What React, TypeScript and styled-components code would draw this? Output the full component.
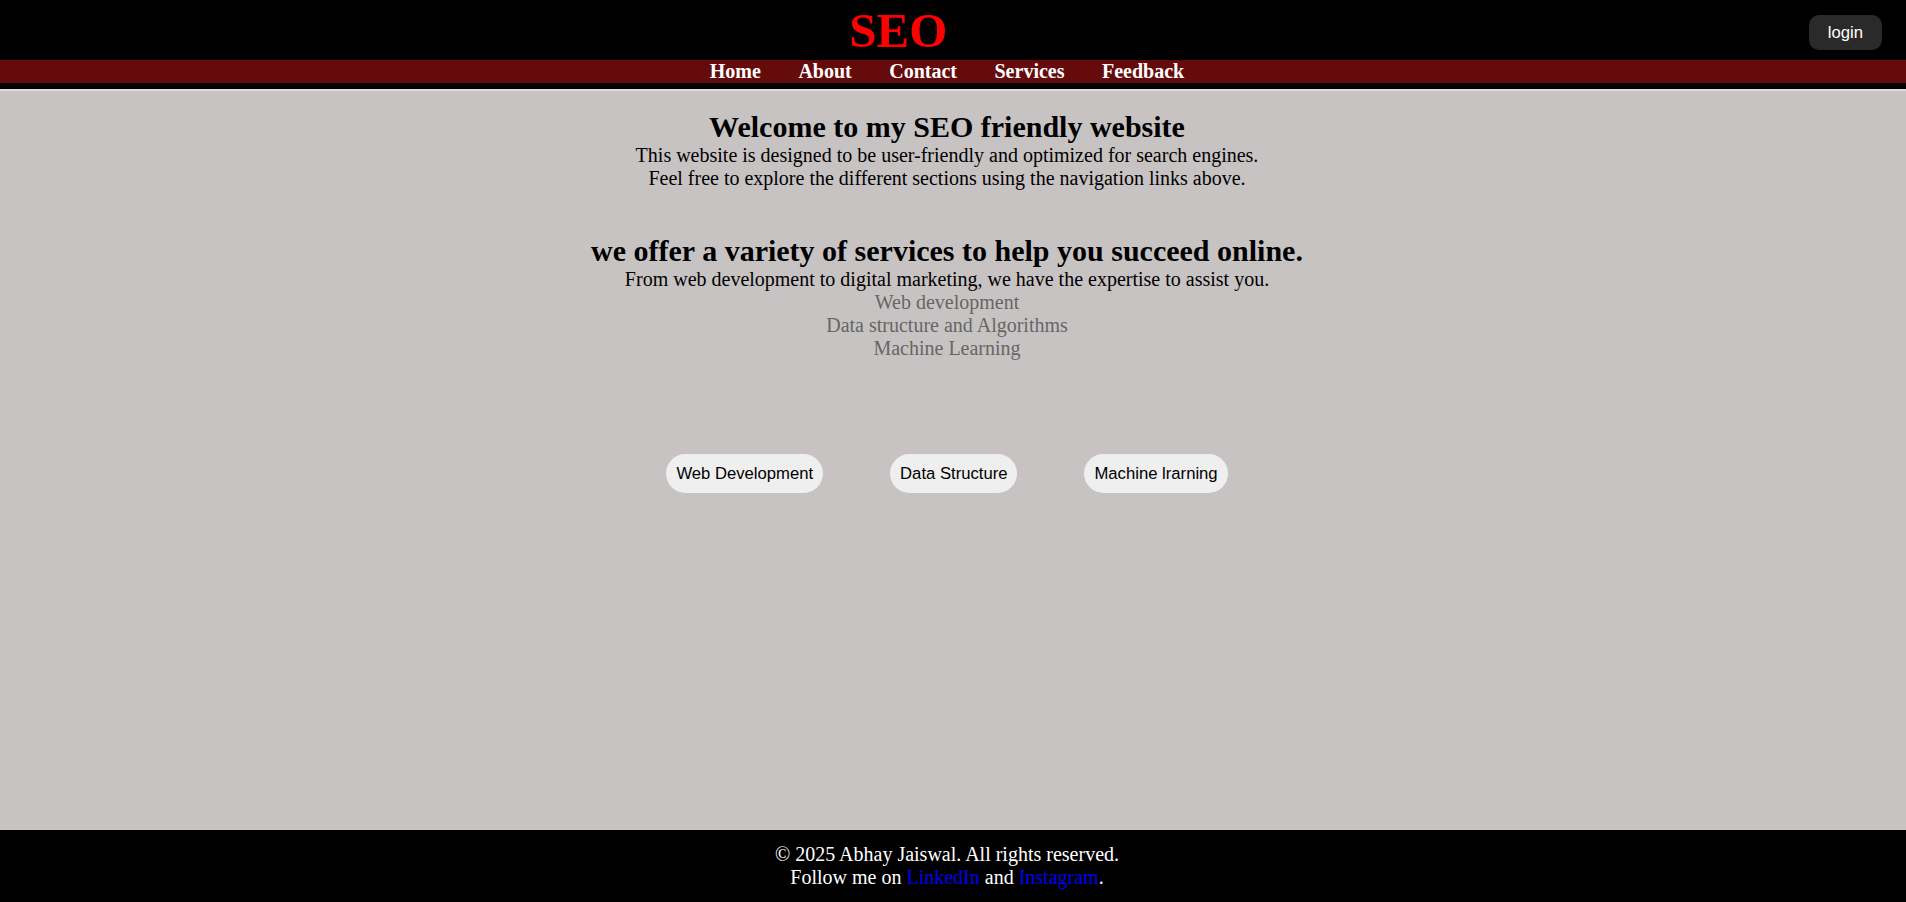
import React from "react";
import styled, { createGlobalStyle } from "styled-components";

const GlobalStyle = createGlobalStyle`
  html, body {
    margin: 0;
    padding: 0;
    background: #000;
    font-family: "Liberation Serif", "Times New Roman", serif;
  }
  * { box-sizing: border-box; }
`;

const Page = styled.div`
  min-height: 100vh;
  display: flex;
  flex-direction: column;
  background: #000;
`;

const Header = styled.header`
  height: 60px;
  display: flex;
  align-items: flex-start;
  background: #000;
`;

const Logo = styled.div`
  flex: 1;
  text-align: center;
  color: #ff0000;
  font-weight: bold;
  font-size: 49px;
  line-height: 60px;
  padding-top: 1px;
`;

const LoginButton = styled.button`
  margin: 15px 24px 0 12px;
  height: 35px;
  padding: 0 19px;
  border: none;
  border-radius: 10px;
  background: #2a2a2a;
  color: #fff;
  font-family: "Liberation Sans", Arial, sans-serif;
  font-size: 16.67px;
  cursor: pointer;
`;

const NavBar = styled.nav`
  height: 23px;
  background: #660b0b;
  display: flex;
  justify-content: center;
  gap: 37.5px;
  padding-right: 12px;
`;

const NavLink = styled.a`
  color: #fff;
  font-weight: bold;
  font-size: 20px;
  line-height: 23px;
  text-decoration: none;
`;

const Rule = styled.div`
  margin-top: 6px;
  height: 2px;
  background: #dcdcdc;
`;

const Main = styled.main`
  flex: 1;
  background: #c8c3c3;
  text-align: center;
  padding: 19px 12px 0 0;
`;

const Section = styled.section<{ $top?: number }>`
  margin-top: ${(p) => p.$top ?? 0}px;
`;

const Heading = styled.h2`
  margin: 0;
  font-size: 30px;
  font-weight: bold;
  color: #000;
`;

const Text = styled.p<{ $muted?: boolean }>`
  margin: 0;
  font-size: 20px;
  line-height: 23px;
  color: ${(p) => (p.$muted ? "#666666" : "#000")};
`;

const ButtonRow = styled.div`
  margin-top: 94px;
  display: flex;
  justify-content: center;
  gap: 67px;
`;

const PillButton = styled.button`
  height: 39px;
  padding: 0 10px;
  border: none;
  border-radius: 20px;
  background: #efefef;
  color: #000;
  font-family: "Liberation Sans", Arial, sans-serif;
  font-size: 16.67px;
  cursor: pointer;
`;

const Footer = styled.footer`
  background: #000;
  color: #fff;
  text-align: center;
  font-size: 20px;
  line-height: 23px;
  padding: 13px 12px 13px 0;
`;

const FooterLine = styled.div``;

const SocialLink = styled.a`
  color: #0000ee;
  text-decoration: none;
`;

export default function App() {
  return (
    <Page>
      <GlobalStyle />
      <Header>
        <Logo>SEO</Logo>
        <LoginButton>login</LoginButton>
      </Header>
      <NavBar>
        <NavLink href="#">Home</NavLink>
        <NavLink href="#">About</NavLink>
        <NavLink href="#">Contact</NavLink>
        <NavLink href="#">Services</NavLink>
        <NavLink href="#">Feedback</NavLink>
      </NavBar>
      <Rule />
      <Main>
        <Section>
          <Heading>Welcome to my SEO friendly website</Heading>
          <Text>This website is designed to be user-friendly and optimized for search engines.</Text>
          <Text>Feel free to explore the different sections using the navigation links above.</Text>
        </Section>
        <Section $top={44}>
          <Heading>we offer a variety of services to help you succeed online.</Heading>
          <Text>From web development to digital marketing, we have the expertise to assist you.</Text>
          <Text $muted>Web development</Text>
          <Text $muted>Data structure and Algorithms</Text>
          <Text $muted>Machine Learning</Text>
        </Section>
        <ButtonRow>
          <PillButton>Web Development</PillButton>
          <PillButton>Data Structure</PillButton>
          <PillButton>Machine lrarning</PillButton>
        </ButtonRow>
      </Main>
      <Footer>
        <FooterLine>© 2025 Abhay Jaiswal. All rights reserved.</FooterLine>
        <FooterLine>
          Follow me on <SocialLink href="#">LinkedIn</SocialLink> and{" "}
          <SocialLink href="#">Instagram</SocialLink>.
        </FooterLine>
      </Footer>
    </Page>
  );
}
